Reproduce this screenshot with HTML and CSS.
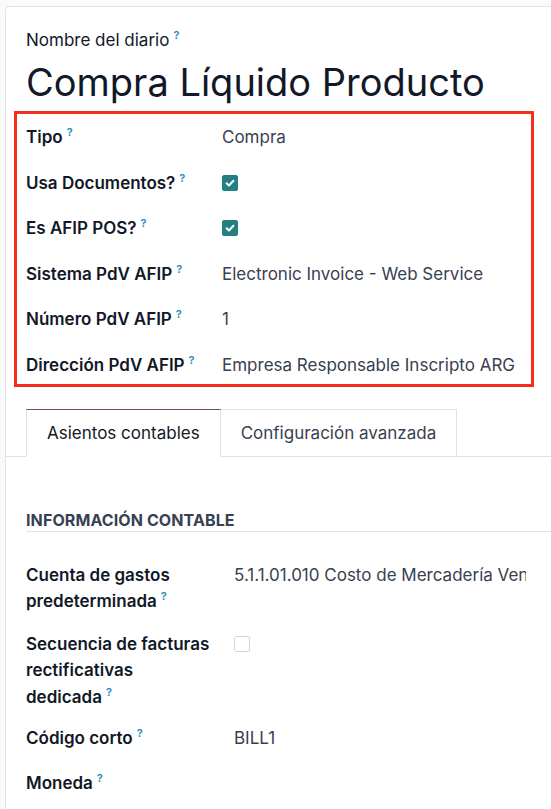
FILE: index.html
```html
<!DOCTYPE html>
<html lang="es">
<head>
<meta charset="utf-8">
<title>Compra Líquido Producto</title>
<link rel="stylesheet" href="styles.css">
</head>
<body>
<div class="card">
  <div class="name-label">Nombre del diario<sup class="tip">?</sup></div>
  <h1 class="title">Compra Líquido Producto</h1>

  <div class="afip-box">
    <div class="row">
      <div class="label">Tipo<sup class="tip">?</sup></div>
      <div class="value">Compra</div>
    </div>
    <div class="row">
      <div class="label">Usa Documentos?<sup class="tip">?</sup></div>
      <div class="value"><span class="check checked"><svg viewBox="0 0 16 16" width="16" height="16"><path d="M4.6 8.3 L7 10.5 L11.4 5.8" fill="none" stroke="#fff" stroke-width="2" stroke-linecap="round" stroke-linejoin="round"/></svg></span></div>
    </div>
    <div class="row">
      <div class="label">Es AFIP POS?<sup class="tip">?</sup></div>
      <div class="value"><span class="check checked"><svg viewBox="0 0 16 16" width="16" height="16"><path d="M4.6 8.3 L7 10.5 L11.4 5.8" fill="none" stroke="#fff" stroke-width="2" stroke-linecap="round" stroke-linejoin="round"/></svg></span></div>
    </div>
    <div class="row">
      <div class="label">Sistema PdV AFIP<sup class="tip">?</sup></div>
      <div class="value">Electronic Invoice - Web Service</div>
    </div>
    <div class="row">
      <div class="label">Número PdV AFIP<sup class="tip">?</sup></div>
      <div class="value">1</div>
    </div>
    <div class="row last">
      <div class="label">Dirección PdV AFIP<sup class="tip">?</sup></div>
      <div class="value">Empresa Responsable Inscripto ARG</div>
    </div>
  </div>

  <div class="tabs">
    <div class="tab active">Asientos contables</div>
    <div class="tab">Configuración avanzada</div>
  </div>

  <div class="tab-pane">
    <div class="section-title">INFORMACIÓN CONTABLE</div>
    <div class="field first">
      <div class="flabel">Cuenta de gastos predeterminada<sup class="tip">?</sup></div>
      <div class="fvalue clip">5.1.1.01.010 Costo de Mercadería Vendida</div>
    </div>
    <div class="field second">
      <div class="flabel">Secuencia de facturas rectificativas dedicada<sup class="tip">?</sup></div>
      <div class="fvalue"><span class="check"></span></div>
    </div>
    <div class="field">
      <div class="flabel">Código corto<sup class="tip">?</sup></div>
      <div class="fvalue">BILL1</div>
    </div>
    <div class="field moneda">
      <div class="flabel">Moneda<sup class="tip">?</sup></div>
      <div class="fvalue"></div>
    </div>
  </div>
</div>
</body>
</html>
```

FILE: styles.css
```css
html, body {
  margin: 0;
  padding: 0;
}

body {
  background: #f9fafb;
  font-family: Inter, "Noto Sans", "Liberation Sans", sans-serif;
  color: #111827;
  overflow: hidden;
}

.card {
  margin: 6px 0 0 5px;
  background: #ffffff;
  border: 1px solid #e2e4e9;
  border-right: none;
  border-bottom: none;
  border-top-left-radius: 5px;
  padding: 21px 0 0 20px;
  min-height: 900px;
}

.tip {
  font-size: 11px;
  font-weight: 600;
  color: #1d8bbd;
  margin-left: 4px;
  vertical-align: baseline;
  position: relative;
  top: -7px;
}

.name-label {
  font-size: 17px;
  line-height: 24px;
  font-weight: 400;
  color: #111827;
}

.title {
  margin: 6px 0 0 0;
  font-size: 38px;
  line-height: 44px;
  font-weight: 400;
  color: #111827;
}

.afip-box {
  margin: 7px 0 0 -12px;
  width: 520px;
  box-sizing: border-box;
  border: 3px solid #f52d1c;
  padding-left: 9px;
}

.row {
  display: flex;
  align-items: flex-start;
  height: 45.6px;
  padding-top: 11px;
  box-sizing: border-box;
}

.row.last {
  height: 42px;
}

.label {
  width: 196px;
  flex: none;
  font-size: 17px;
  line-height: 24px;
  font-weight: 600;
  color: #111827;
}

.value {
  font-size: 17px;
  line-height: 24px;
  color: #374151;
  display: flex;
  align-items: center;
  min-height: 24px;
}

.check {
  display: inline-block;
  width: 16px;
  height: 16px;
  box-sizing: border-box;
  border: 1px solid #d1d5db;
  border-radius: 2px;
  background: #fff;
}

.check.checked {
  background: #237f81;
  border-color: #237f81;
  position: relative;
}

.check.checked svg {
  position: absolute;
  left: -1px;
  top: -1px;
}

.tabs {
  display: flex;
  margin: 22px 0 0 -20px;
  padding-left: 20px;
  border-bottom: 1px solid #dee2e6;
  height: 47px;
}

.tab {
  height: 48px;
  box-sizing: border-box;
  padding: 0 20px;
  line-height: 46px;
  font-size: 17px;
  color: #374151;
  border: 1px solid #dee2e6;
  background: #fff;
  white-space: nowrap;
}

.tab.active {
  color: #111827;
  border-top-color: #714b67;
  border-bottom-color: #fff;
}

.tab + .tab {
  border-left: none;
}

.tab-pane {
  padding-top: 52px;
}

.section-title {
  font-size: 16px;
  line-height: 22px;
  font-weight: 700;
  color: #374151;
  letter-spacing: 0.1px;
  border-bottom: 1px solid #dee2e6;
  margin-bottom: 30px;
}

.field {
  display: flex;
  align-items: flex-start;
  margin-bottom: 16px;
}

.field.first {
  margin-bottom: 14px;
}

.field.second {
  margin-bottom: 13px;
}

.field.moneda {
  margin-top: 3px;
}

.flabel {
  width: 190px;
  padding-right: 18px;
  flex: none;
  font-size: 17px;
  line-height: 26.5px;
  font-weight: 600;
  color: #111827;
}

.fvalue {
  font-size: 17px;
  line-height: 26px;
  color: #374151;
  display: flex;
  align-items: center;
  height: 26px;
}

.fvalue.clip {
  width: 292px;
  overflow: hidden;
  white-space: nowrap;
  display: block;
}
```
